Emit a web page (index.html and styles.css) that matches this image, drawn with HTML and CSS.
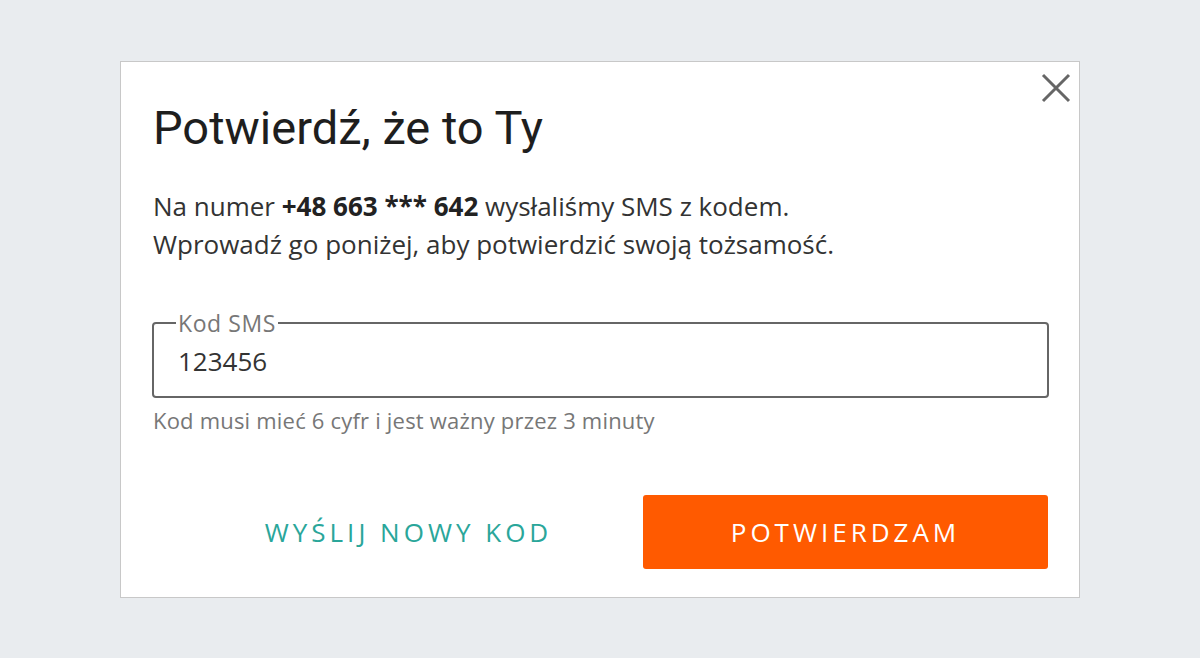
FILE: index.html
```html
<!DOCTYPE html>
<html lang="pl">
<head>
<meta charset="utf-8">
<title>Potwierdź, że to Ty</title>
<link rel="stylesheet" href="styles.css">
</head>
<body>
<div class="dialog">
  <button class="close" aria-label="Zamknij">
    <svg width="30" height="30" viewBox="0 0 30 30"><path d="M2 2 L28 28 M28 2 L2 28" stroke="#666" stroke-width="3" fill="none"/></svg>
  </button>
  <h1 class="title">Potwierdź, że to Ty</h1>
  <p class="text">Na numer <b>+48 663 *** 642</b> wysłaliśmy SMS z kodem.<br>Wprowadź go poniżej, aby potwierdzić swoją tożsamość.</p>
  <fieldset class="field">
    <legend class="label">Kod SMS</legend>
    <div class="value">123456</div>
  </fieldset>
  <p class="hint">Kod musi mieć 6 cyfr i jest ważny przez 3 minuty</p>
  <div class="actions">
    <button class="btn btn-text">WYŚLIJ NOWY KOD</button>
    <button class="btn btn-primary">POTWIERDZAM</button>
  </div>
</div>
</body>
</html>
```
FILE: styles.css
```css
* { box-sizing: border-box; }
html, body { margin: 0; height: 100%; }
body {
  background: #e9ecef;
  display: flex;
  align-items: center;
  justify-content: center;
  font-family: "Open Sans", "Liberation Sans", sans-serif;
}
.dialog {
  position: relative;
  width: 960px;
  height: 537px;
  background: #fff;
  border: 1px solid #c8c8c8;
  padding: 38px 32px 0 32px;
}
.close {
  position: absolute;
  top: 11px;
  right: 8px;
  background: none;
  border: 0;
  padding: 0;
  width: 30px;
  height: 30px;
  cursor: pointer;
}
.close svg { display: block; }
.title {
  margin: 0;
  font-family: Roboto, "Liberation Sans", sans-serif;
  font-weight: 400;
  font-size: 47px;
  line-height: 56px;
  color: #1e1e1e;
}
.text {
  margin: 31px 0 0 0;
  font-size: 26px;
  line-height: 38px;
  color: #333;
}
.text b { font-weight: 700; color: #222; }
.field {
  margin: 48px 0 0 -1px;
  border: 2px solid #666;
  border-radius: 4px;
  padding: 0 24px 0 24px;
  height: 87px;
  min-width: 0;
  width: 897px;
}
.label {
  padding: 0 2px;
  margin-left: -2px;
  font-size: 23px;
  letter-spacing: 0.6px;
  line-height: 24px;
  color: #777;
}
.value {
  font-size: 26px;
  line-height: 32px;
  color: #333;
  padding-top: 10px;
}
.hint {
  margin: 8px 0 0 0;
  font-size: 22px;
  letter-spacing: 0.2px;
  line-height: 28px;
  color: #777;
}
.actions {
  margin-top: 61px;
  display: flex;
  justify-content: flex-end;
  gap: 32px;
  width: 895px;
}
.btn {
  width: 405px;
  height: 74px;
  border: 0;
  border-radius: 3px;
  font-family: "Open Sans", "Liberation Sans", sans-serif;
  font-size: 26px;
  letter-spacing: 4px;
  cursor: pointer;
}
.btn-text {
  background: none;
  color: #2aa69a;
}
.btn-primary {
  background: #ff5a00;
  color: #fff;
}
```
